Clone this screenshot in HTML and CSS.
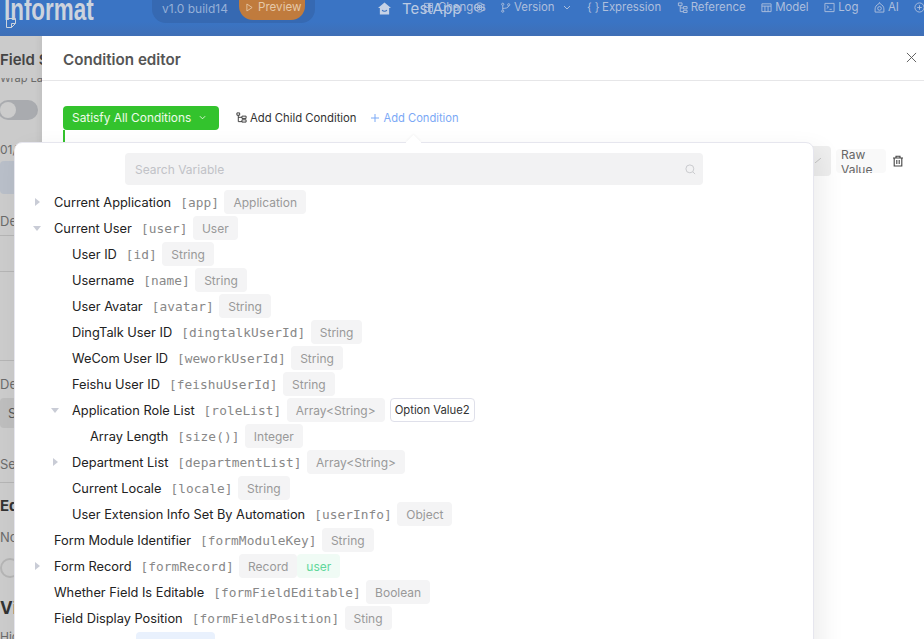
FILE: index.html
```html
<!DOCTYPE html>
<html lang="en">
<head>
<meta charset="utf-8">
<title>Condition editor</title>
<link rel="stylesheet" href="styles.css">
</head>
<body>
<header class="topbar">
  <div class="brand"><span class="logo">Informat</span>
    <svg class="doc" viewBox="0 0 10 10"><path d="M.5.5h9v5l-4 4h-5zM9.500 5.500h-4v4" fill="none" stroke="currentColor"/></svg>
  </div>
  <div class="build">
    <span class="build-text">v1.0 build14</span>
    <span class="preview"><svg class="play" viewBox="0 0 8 10"><path d="M1 1l6 4-6 4z" fill="none" stroke="currentColor"/></svg>Preview</span>
  </div>
  <div class="app">
    <svg class="home" viewBox="0 0 14 14"><path d="M7 .5L14 6.500h-2V13.500H2V6.500H0z" fill="currentColor"/><path d="M4.500 8.500c1 2 4 2 5 0" fill="none" stroke="#3a72c0" stroke-width="1.200"/></svg>
    <span class="app-name">TestApp</span>
  </div>
  <nav class="nav">
    <span class="nav-item changes"><svg class="ico" viewBox="0 0 12 12"><path d="M1.500 1.500h9v9h-9zM6 1.500v9M1.500 6h9" fill="none" stroke="currentColor"/></svg><span class="changes-text">Changes</span><svg class="ico swirl" viewBox="0 0 12 12"><circle cx="6" cy="6" r="5" fill="none" stroke="currentColor"/><circle cx="6" cy="6" r="2.500" fill="none" stroke="currentColor"/><path d="M3.500 6h5M6 3.500v5" stroke="currentColor"/></svg></span>
    <span class="nav-item version"><svg class="ico" viewBox="0 0 12 12"><circle cx="3" cy="2.500" r="1.200" fill="none" stroke="currentColor"/><circle cx="3" cy="10" r="1.200" fill="none" stroke="currentColor"/><circle cx="9.500" cy="3" r="1.200" fill="none" stroke="currentColor"/><path d="M3 4v4.500M3 7c3 0 6-.5 6.500-2.800" fill="none" stroke="currentColor"/></svg>Version<svg class="chev" viewBox="0 0 8 5"><path d="M1 1l3 3 3-3" fill="none" stroke="currentColor"/></svg></span>
    <span class="nav-item"><span class="braces">{ }</span>Expression</span>
    <span class="nav-item"><svg class="ico" viewBox="0 0 12 12"><path d="M1.500 1h4v3h-4zM7 5h4v2.500H7zM7 9h4v2.500H7zM3.500 4v6.500H7M3.500 6.500H7" fill="none" stroke="currentColor"/></svg>Reference</span>
    <span class="nav-item"><svg class="ico" viewBox="0 0 12 12"><path d="M1 2h10v8.500H1zM1 4.500h10M4.300 4.500v6M7.700 4.500v6" fill="none" stroke="currentColor"/></svg>Model</span>
    <span class="nav-item"><svg class="ico" viewBox="0 0 12 12"><path d="M1 1.500h10v9H1zM3 4l2 1.500L3 7M6 8h2.500" fill="none" stroke="currentColor"/></svg>Log</span>
    <span class="nav-item"><svg class="ico" viewBox="0 0 12 12"><path d="M6 .5l1 1.800c2.300.8 3.800 3 3.800 5.200v3.500H1.200V7.500c0-2.200 1.500-4.400 3.800-5.200z" fill="none" stroke="currentColor"/><circle cx="6" cy="7" r="2" fill="none" stroke="currentColor"/></svg>AI</span>
    <span class="nav-item"><svg class="ico" viewBox="0 0 12 12"><circle cx="6" cy="6" r="5" fill="none" stroke="currentColor"/><path d="M3.500 6h5M6 3.500v5" stroke="currentColor"/></svg></span>
  </nav>
</header>

<main class="stage">
  <aside class="panel">
    <h2 class="panel-title">Field Settings</h2>
    <p class="panel-wrap">Wrap Label</p>
    <span class="toggle"></span>
    <p class="panel-date">01/01/2024</p>
    <div class="panel-block"></div>
    <p class="panel-de">Default</p>
    <div class="panel-lines"></div>
    <p class="panel-de2">Default</p>
    <div class="panel-select">Select</div>
    <p class="panel-se">Setting</p>
    <h3 class="panel-ed">Editable</h3>
    <p class="panel-no">None</p>
    <span class="ring"></span>
    <h3 class="panel-vi">Visible</h3>
    <p class="panel-hi">Hidden</p>
  </aside>

  <section class="drawer">
    <div class="drawer-head">
      <h1 class="drawer-title">Condition editor</h1>
      <svg class="close" viewBox="0 0 12 12"><path d="M1 1l10 10M11 1L1 11" stroke="currentColor" fill="none"/></svg>
    </div>
    <div class="toolbar">
      <span class="satisfy">Satisfy All Conditions<svg class="satisfy-chev" viewBox="0 0 8 5"><path d="M1 1l3 3 3-3" fill="none" stroke="currentColor"/></svg></span>
      <span class="add-child"><svg class="child-ico" viewBox="0 0 12 12"><path d="M1 1h3v2.500H1zM6.500 4.500H11V7H6.500zM6.500 8.500H11V11H6.500zM2.500 3.500v7h4M2.500 5.800h4" fill="none" stroke="currentColor"/></svg>Add Child Condition</span>
      <span class="add-cond"><svg class="plus" viewBox="0 0 8 8"><path d="M4 0v8M0 4h8" stroke="currentColor" fill="none"/></svg>Add Condition</span>
    </div>
    <div class="cond-row">
      <div class="cond-select"><svg class="cond-chev" viewBox="0 0 6 5"><path d="M0 5l6-5" stroke="currentColor"/></svg></div>
      <span class="raw"><span class="raw-text">Raw Value</span></span>
      <svg class="trash" viewBox="0 0 12 12"><path d="M1 3h10M4 3V1.200h4V3M2.200 3v8h7.600V3M4.800 5v4M7.200 5v4" fill="none" stroke="currentColor" stroke-width="1.100"/></svg>
    </div>
    <div class="green-rail"></div>
  </section>

  <section class="popover">
    <span class="arrow"></span>
    <div class="search-wrap">
      <div class="search"><span>Search Variable</span>
        <svg class="search-ico" viewBox="0 0 12 12"><circle cx="5.300" cy="5.300" r="4.300" fill="none" stroke="currentColor"/><path d="M8.500 8.500L11 11" stroke="currentColor"/></svg>
      </div>
    </div>
    <ul class="tree">
      <li class="row l0"><i class="caret right"></i><span class="name">Current Application</span><code class="key">[app]</code><span class="tag">Application</span></li>
      <li class="row l0"><i class="caret down"></i><span class="name">Current User</span><code class="key">[user]</code><span class="tag">User</span></li>
      <li class="row l1"><span class="name">User ID</span><code class="key">[id]</code><span class="tag">String</span></li>
      <li class="row l1"><span class="name">Username</span><code class="key">[name]</code><span class="tag">String</span></li>
      <li class="row l1"><span class="name">User Avatar</span><code class="key">[avatar]</code><span class="tag">String</span></li>
      <li class="row l1"><span class="name">DingTalk User ID</span><code class="key">[dingtalkUserId]</code><span class="tag">String</span></li>
      <li class="row l1"><span class="name">WeCom User ID</span><code class="key">[weworkUserId]</code><span class="tag">String</span></li>
      <li class="row l1"><span class="name">Feishu User ID</span><code class="key">[feishuUserId]</code><span class="tag">String</span></li>
      <li class="row l1"><i class="caret down"></i><span class="name">Application Role List</span><code class="key">[roleList]</code><span class="tag">Array&lt;String&gt;</span><span class="option">Option Value2</span></li>
      <li class="row l2"><span class="name">Array Length</span><code class="key">[size()]</code><span class="tag">Integer</span></li>
      <li class="row l1"><i class="caret right"></i><span class="name">Department List</span><code class="key">[departmentList]</code><span class="tag">Array&lt;String&gt;</span></li>
      <li class="row l1"><span class="name">Current Locale</span><code class="key">[locale]</code><span class="tag">String</span></li>
      <li class="row l1"><span class="name">User Extension Info Set By Automation</span><code class="key">[userInfo]</code><span class="tag">Object</span></li>
      <li class="row l0"><span class="name">Form Module Identifier</span><code class="key">[formModuleKey]</code><span class="tag">String</span></li>
      <li class="row l0"><i class="caret right"></i><span class="name">Form Record</span><code class="key">[formRecord]</code><span class="tag">Record</span><span class="tag-green">user</span></li>
      <li class="row l0"><span class="name">Whether Field Is Editable</span><code class="key">[formFieldEditable]</code><span class="tag">Boolean</span></li>
      <li class="row l0"><span class="name">Field Display Position</span><code class="key">[formFieldPosition]</code><span class="tag">Sting</span></li>
      <li class="row l0"><span class="name">Parent Field</span><span class="tag-blue">Field</span></li>
    </ul>
  </section>
</main>
</body>
</html>
```
FILE: styles.css
```css
* { box-sizing: border-box; }
html, body { margin: 0; height: 100%; overflow: hidden; }
body { font-family: Inter, "Noto Sans", sans-serif; font-size: 12px; color: #222; background: #cbcbcb; }
p, h1, h2, h3, ul { margin: 0; padding: 0; }
ul { list-style: none; }

.topbar { position: relative; height: 36px; display: flex; background: linear-gradient(#3a74c4 0, #3a74c4 22px, #3f6fb6 36px); color: #aebfdd; overflow: hidden; }
.brand { position: relative; width: 152px; flex: none; }
.logo { position: absolute; left: 4px; top: -9px; font-family: "Liberation Sans", sans-serif; font-weight: 700; font-size: 32px; line-height: 36px; color: #ccd3dd; white-space: nowrap; transform: scaleX(.7); transform-origin: left center; }
.doc { position: absolute; left: 6px; top: 18px; width: 10px; height: 10px; color: #ccd3dd; }
.build { width: 163px; height: 23px; flex: none; display: flex; background: #3669b2; border-radius: 0 0 14px 14px; padding-left: 10px; font-size: 12px; line-height: 17px; }
.build-text { color: #95b0d8; width: 77px; white-space: nowrap; }
.preview { width: 66px; height: 20px; flex: none; display: flex; align-items: center; background: #c07b3d; border-radius: 0 0 14px 14px; padding-left: 7px; color: #e6c8a8; gap: 5px; line-height: 15px; padding-bottom: 5px; font-size: 11.600px; }
.play { width: 7px; height: 9px; }
.app { display: flex; align-items: flex-start; margin-left: 63px; width: 146px; flex: none; margin-right: -101px; padding-top: 1px; }
.home { width: 13px; height: 13px; margin-top: 1px; color: #c6d2e6; }
.app-name { margin-left: 11px; font-size: 15px; line-height: 16px; color: #bccbe3; letter-spacing: .1px; }
.nav { display: flex; align-items: flex-start; gap: 15.500px; flex: none; line-height: 15px; font-size: 11.400px; }
.nav-item { display: flex; align-items: center; gap: 3px; white-space: nowrap; height: 15px; }
.changes { width: 62.500px; gap: 4px; }
.changes-text { flex: none; }
.swirl { margin-left: -16px; }
.ico { width: 11px; height: 11px; flex: none; }
.version { margin-left: -1px; margin-right: 1px; }
.chev { width: 8px; height: 5px; margin-left: 5px; }
.braces { width: 12px; font-size: 11px; white-space: nowrap; }

.stage { position: relative; height: 603px; overflow: hidden; }
.panel { width: 300px; height: 100%; padding-top: 15px; color: #6a6a6a; background: #cbcbcb; overflow: hidden; white-space: nowrap; }
.panel-title { font-size: 15px; line-height: 18px; color: #444; font-weight: 600; }
.panel-wrap { margin-top: 9px; height: 7px; line-height: 0; font-size: 11px; overflow: hidden; }
.toggle { display: block; width: 40px; height: 20px; margin: 15px 0 0 -2px; background: #a9abaf; border-radius: 10px; position: relative; }
.toggle::after { content: ""; position: absolute; left: 2px; top: 2px; width: 16px; height: 16px; border-radius: 50%; background: #ccc; }
.panel-date { margin-top: 22px; line-height: 15px; }
.panel-block { height: 33px; margin-top: 4px; background: #b8bec8; border-radius: 4px; }
.panel-de { margin-top: 20px; line-height: 15px; font-size: 13px; }
.panel-lines { height: 37px; margin-top: 6px; border-top: 1px solid #b4b4b4; border-bottom: 1px solid #b4b4b4; }
.panel-de2 { margin-top: 88px; padding-top: 16px; border-top: 1px solid #b4b4b4; line-height: 15px; font-size: 13px; }
.panel-select { height: 30px; margin-top: 6px; padding-left: 8px; background: #bdbdbd; border-radius: 4px; line-height: 30px; font-size: 13px; color: #555; }
.panel-se { margin-top: 29px; padding-bottom: 10px; line-height: 15px; font-size: 13px; border-bottom: 1px solid #b4b4b4; }
.panel-ed { margin-top: 14px; font-size: 15px; line-height: 18px; color: #333; font-weight: 700; }
.panel-no { margin-top: 15px; line-height: 15px; font-size: 13px; }
.ring { display: block; width: 20px; height: 20px; margin-top: 13px; border: 2px solid #b4b4b4; border-radius: 50%; }
.panel-vi { margin-top: 20px; font-size: 17px; line-height: 20px; color: #333; font-weight: 700; }
.panel-hi { margin-top: 12px; line-height: 14px; }

.drawer { position: absolute; left: 42px; top: 0; right: 0; bottom: 0; background: #fff; box-shadow: -3px 0 6px rgba(0,0,0,.05); }
.drawer-head { height: 45px; padding: 0 7px 0 21px; border-bottom: 1px solid #e6e6e8; display: flex; align-items: center; justify-content: space-between; }
.drawer-title { font-size: 15.200px; font-weight: 600; color: #555; line-height: 20px; margin-top: 3px; }
.close { width: 11px; height: 11px; color: #555; margin-top: -1px; }
.toolbar { display: flex; align-items: center; padding: 25px 0 0 21px; height: 49px; font-size: 11.300px; }
.satisfy { width: 156px; height: 24px; display: flex; align-items: center; gap: 8px; padding: 0 0 1px 9px; background: #33c32d; color: #eefbe9; border-radius: 4px; white-space: nowrap; font-size: 11.900px; }
.satisfy-chev { width: 7px; height: 5px; }
.add-child { display: flex; align-items: center; gap: 3px; margin-left: 17px; padding-bottom: 1px; color: #333; white-space: nowrap; }
.child-ico { width: 11px; height: 11px; }
.add-cond { display: flex; align-items: center; gap: 5px; margin-left: 14px; padding-bottom: 1px; color: #7ba9f6; white-space: nowrap; font-size: 11.150px; }
.plus { width: 8px; height: 8px; }
.cond-row { position: absolute; top: 110px; left: 0; right: 0; height: 30px; display: flex; align-items: center; padding-left: 690px; }
.cond-select { width: 100px; height: 30px; margin-left: -1px; background: #efefef; border-radius: 4px; flex: none; position: relative; }
.cond-chev { position: absolute; right: 10px; top: 12px; width: 6px; height: 5px; color: #c4c4c4; }
.raw { width: 50px; height: 24px; margin-left: 5px; background: #f9f9f9; border-radius: 4px; padding-left: 5px; line-height: 15px; color: #666; overflow: hidden; flex: none; }
.raw-text { display: block; margin-top: -2px; }
.trash { width: 12px; height: 12px; margin-left: 6px; color: #444; flex: none; }
.green-rail { position: absolute; left: 21px; top: 94px; width: 2px; height: 60px; background: #33c32d; }

.popover { position: absolute; left: 14px; top: 106px; width: 800px; height: 560px; background: #fff; border: 1px solid #e6e6ee; border-radius: 8px; box-shadow: 8px 8px 24px rgba(0,0,0,.07); }
.arrow { position: absolute; left: 393px; top: -6px; width: 11px; height: 11px; background: #fff; transform: rotate(45deg); box-shadow: -1px -1px 2px rgba(0,0,0,.03); }
.search-wrap { position: relative; padding: 10px 0 0 110px; }
.search { width: 578px; height: 32px; display: flex; align-items: center; justify-content: space-between; background: #f2f2f3; border-radius: 4px; padding: 0 7px 0 10px; color: #c1c2c7; }
.search-ico { width: 11px; height: 11px; color: #c6c7cb; }
.tree { margin-top: 4px; }
.row { position: relative; height: 26px; display: flex; align-items: center; white-space: nowrap; }
.l0 { padding-left: 39px; }
.l1 { padding-left: 57px; }
.l2 { padding-left: 75px; }
.caret { position: absolute; top: 9px; width: 0; height: 0; }
.caret.right { border-left: 5px solid #c9ccd6; border-top: 4px solid transparent; border-bottom: 4px solid transparent; margin-left: -19px; }
.caret.down { border-top: 5px solid #c9ccd6; border-left: 4px solid transparent; border-right: 4px solid transparent; margin-left: -21px; top: 11px; }
.name { color: #222; font-size: 12.800px; }
.key { margin-left: 9px; font-family: "DejaVu Sans Mono", monospace; font-size: 12.800px; letter-spacing: .06px; color: #888; }
.tag { height: 24px; margin-left: 5.400px; padding: 0 9px; display: flex; align-items: center; background: #f4f4f5; color: #999; border-radius: 4px; }
.option { height: 24px; margin-left: 5px; padding: 0 4px; display: flex; align-items: center; background: #fff; border: 1px solid #dfe0ea; border-radius: 4px; color: #333; font-size: 11.300px; }
.tag-green { height: 24px; padding: 0 9px; display: flex; align-items: center; background: #f0fbf5; color: #5fd79a; border-radius: 4px; }
.tag-blue { height: 24px; width: 79px; margin-left: 10px; padding: 0 9px; display: flex; align-items: center; background: #e9f1fd; color: #6a9df0; border-radius: 4px; }
```
